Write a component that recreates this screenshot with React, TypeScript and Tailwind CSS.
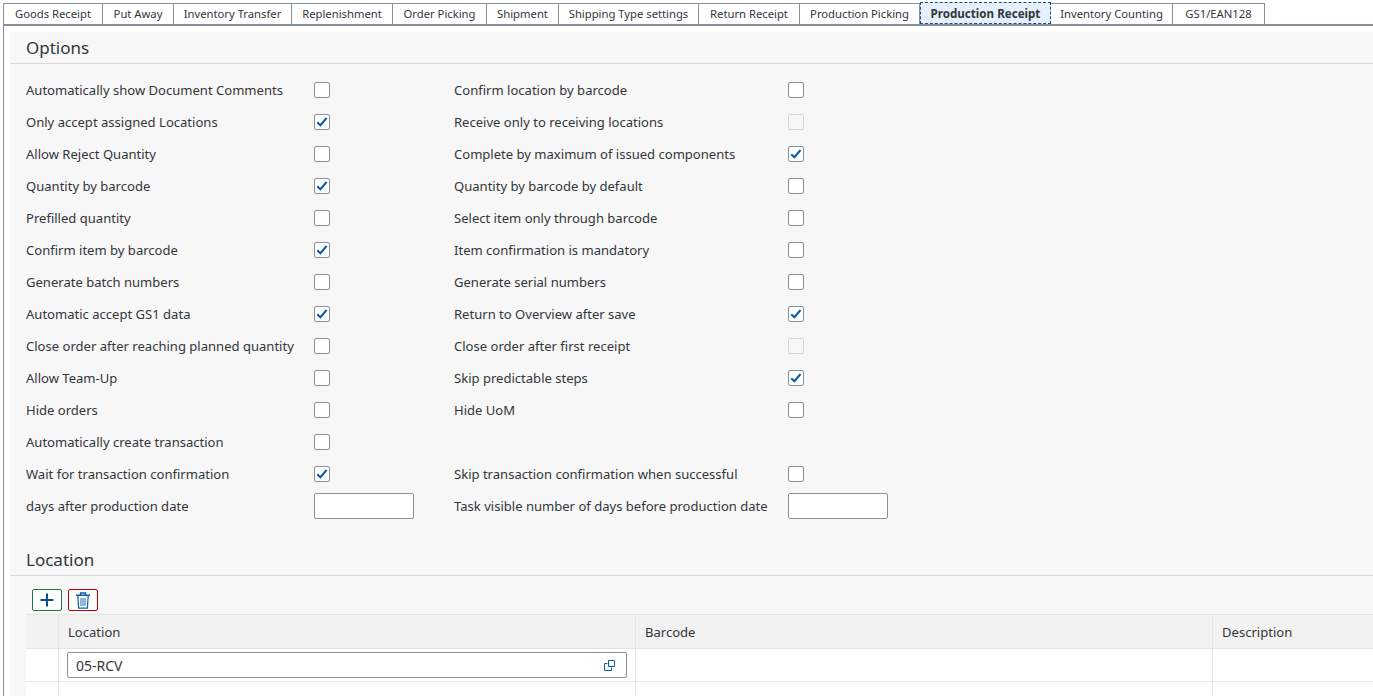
import React from "react";

const tabs = [
  { name: "Goods Receipt", width: "w-[100px]" },
  { name: "Put Away", width: "w-[71px]" },
  { name: "Inventory Transfer", width: "w-[118px]" },
  { name: "Replenishment", width: "w-[101px]" },
  { name: "Order Picking", width: "w-[94px]" },
  { name: "Shipment", width: "w-[72px]" },
  { name: "Shipping Type settings", width: "w-[140px]" },
  { name: "Return Receipt", width: "w-[101px]" },
  { name: "Production Picking", width: "w-[120px]" },
  { name: "Production Receipt", width: "w-[131px]", active: true },
  { name: "Inventory Counting", width: "w-[122px]" },
  { name: "GS1/EAN128", width: "w-[92px]" },
];

type Box = "off" | "on" | "disabled" | "input" | "none";

const rows: { left: string; leftBox: Box; right: string; rightBox: Box }[] = [
  { left: "Automatically show Document Comments", leftBox: "off", right: "Confirm location by barcode", rightBox: "off" },
  { left: "Only accept assigned Locations", leftBox: "on", right: "Receive only to receiving locations", rightBox: "disabled" },
  { left: "Allow Reject Quantity", leftBox: "off", right: "Complete by maximum of issued components", rightBox: "on" },
  { left: "Quantity by barcode", leftBox: "on", right: "Quantity by barcode by default", rightBox: "off" },
  { left: "Prefilled quantity", leftBox: "off", right: "Select item only through barcode", rightBox: "off" },
  { left: "Confirm item by barcode", leftBox: "on", right: "Item confirmation is mandatory", rightBox: "off" },
  { left: "Generate batch numbers", leftBox: "off", right: "Generate serial numbers", rightBox: "off" },
  { left: "Automatic accept GS1 data", leftBox: "on", right: "Return to Overview after save", rightBox: "on" },
  { left: "Close order after reaching planned quantity", leftBox: "off", right: "Close order after first receipt", rightBox: "disabled" },
  { left: "Allow Team-Up", leftBox: "off", right: "Skip predictable steps", rightBox: "on" },
  { left: "Hide orders", leftBox: "off", right: "Hide UoM", rightBox: "off" },
  { left: "Automatically create transaction", leftBox: "off", right: "", rightBox: "none" },
  { left: "Wait for transaction confirmation", leftBox: "on", right: "Skip transaction confirmation when successful", rightBox: "off" },
  { left: "days after production date", leftBox: "input", right: "Task visible number of days before production date", rightBox: "input" },
];

const Control: React.FC<{ kind: Box }> = ({ kind }) => {
  if (kind === "none") return <div />;
  if (kind === "input") {
    return <div className="w-[100px] h-[26px] bg-white border border-[#89919a] rounded-[2px]" />;
  }
  if (kind === "disabled") {
    return <div className="w-4 h-4 bg-[#f7f7f7] border border-[#d3d6d9] rounded-[2px]" />;
  }
  return (
    <div className="w-4 h-4 bg-white border border-[#89919a] rounded-[2px] flex items-center justify-center">
      {kind === "on" && (
        <svg width="12" height="10" viewBox="0 0 12 10" fill="none">
          <path d="M1.2 5.2 L4.4 8.2 L10.6 1" stroke="#0a5ea8" strokeWidth="2" />
        </svg>
      )}
    </div>
  );
};

const App: React.FC = () => {
  return (
    <div className="h-[696px] w-[1373px] overflow-hidden bg-white text-[#32363a] text-[13.05px] font-['Noto_Sans','Open_Sans',sans-serif] pt-1 pl-[3px]">
      {/* Tab strip */}
      <div className="flex items-end h-[22px] border-b-2 border-[#89919a] -mr-px">
        {tabs.map((tab) =>
          tab.active ? (
            <div
              key={tab.name}
              className={`${tab.width} h-[22px] -mt-px pt-[2px] flex items-center justify-center text-[11.6px] font-bold bg-[#e5f0fa] border border-dashed border-[#0a4f8f]`}
            >
              {tab.name}
            </div>
          ) : (
            <div
              key={tab.name}
              className={`${tab.width} h-[21px] flex items-center justify-center text-[11.25px] bg-white border border-l-0 first:border-l border-b-0 border-[#89919a]`}
            >
              {tab.name}
            </div>
          )
        )}
      </div>

      {/* Panel */}
      <div className="border-l border-[#89919a] h-[670px] pl-[6px] pt-[6px]">
        <div className="bg-[#f7f7f7] h-full">
          {/* Options */}
          <h2 className="h-[32px] pl-4 text-[17px] leading-[32px] border-b border-[#d9d9d9]">Options</h2>
          <div className="pt-[10px] pl-4">
            {rows.map((row) => (
              <div
                key={row.left}
                className="h-[32px] grid grid-cols-[288px_140px_334px_110px] items-center"
              >
                <span className="pt-[2px]">{row.left}</span>
                <Control kind={row.leftBox} />
                <span className="pt-[2px]">{row.right}</span>
                <Control kind={row.rightBox} />
              </div>
            ))}
          </div>

          {/* Location */}
          <h2 className="mt-[22px] h-[32px] pl-4 text-[17px] leading-[32px] border-b border-[#d9d9d9]">Location</h2>
          <div className="pl-4 pt-[13px]">
            <div className="flex gap-[6px] pl-[6px] h-[25px]">
              <button className="w-[30px] h-[22px] bg-white border border-[#107e3e] rounded-[2px] flex items-center justify-center">
                <svg width="14" height="14" viewBox="0 0 14 14" fill="none">
                  <path d="M7 0.5 V13.5 M0.5 7 H13.5" stroke="#0a4f8f" strokeWidth="2" />
                </svg>
              </button>
              <button className="w-[30px] h-[22px] bg-white border border-[#bb0000] rounded-[2px] flex items-center justify-center">
                <svg width="14" height="17" viewBox="0 0 14 17" fill="none" stroke="#0a5ea8">
                  <path d="M0 3.2 H14 M4.5 3 V1 H9.5 V3" strokeWidth="1.4" />
                  <path d="M1.8 3.5 L2.6 16.2 H11.4 L12.2 3.5" strokeWidth="1.2" />
                  <path d="M5 6 V14 M7 6 V14 M9 6 V14" strokeWidth="0.9" />
                </svg>
              </button>
            </div>

            {/* Location table */}
            <div className="border-t border-[#e5e5e5]">
              <div className="grid grid-cols-[33px_577px_577px_200px] h-[34px] bg-[#f2f2f2] border-b border-[#e5e5e5] items-center">
                <div className="h-full border-r border-[#e5e5e5]" />
                <div className="pl-[9px] pt-[2px] h-full border-r border-[#e5e5e5] flex items-center">Location</div>
                <div className="pl-[9px] pt-[2px] h-full border-r border-[#e5e5e5] flex items-center">Barcode</div>
                <div className="pl-[9px] pt-[2px]">Description</div>
              </div>
              <div className="grid grid-cols-[33px_577px_577px_200px] h-[33px] bg-white border-b border-[#e5e5e5]">
                <div className="border-r border-[#e5e5e5]" />
                <div className="border-r border-[#e5e5e5] flex items-center pl-2 pr-2">
                  <div className="w-full h-[26px] border border-[#89919a] rounded-[2px] bg-white flex items-center justify-between pl-2 pr-[11px]">
                    <span className="text-[14px]">05-RCV</span>
                    <svg width="11" height="11" viewBox="0 0 11 11" fill="none" stroke="#0a5ea8">
                      <path d="M3.5 3.5 H0.5 V10.5 H7.5 V7.5" />
                      <path d="M4.5 0.5 H10.5 V6.5 H4.5 Z" />
                    </svg>
                  </div>
                </div>
                <div className="border-r border-[#e5e5e5]" />
                <div />
              </div>
              <div className="grid grid-cols-[33px_577px_577px_200px] h-[33px] bg-white">
                <div className="border-r border-[#e5e5e5]" />
                <div className="border-r border-[#e5e5e5]" />
                <div className="border-r border-[#e5e5e5]" />
                <div />
              </div>
            </div>
          </div>
        </div>
      </div>
    </div>
  );
};

export default App;
